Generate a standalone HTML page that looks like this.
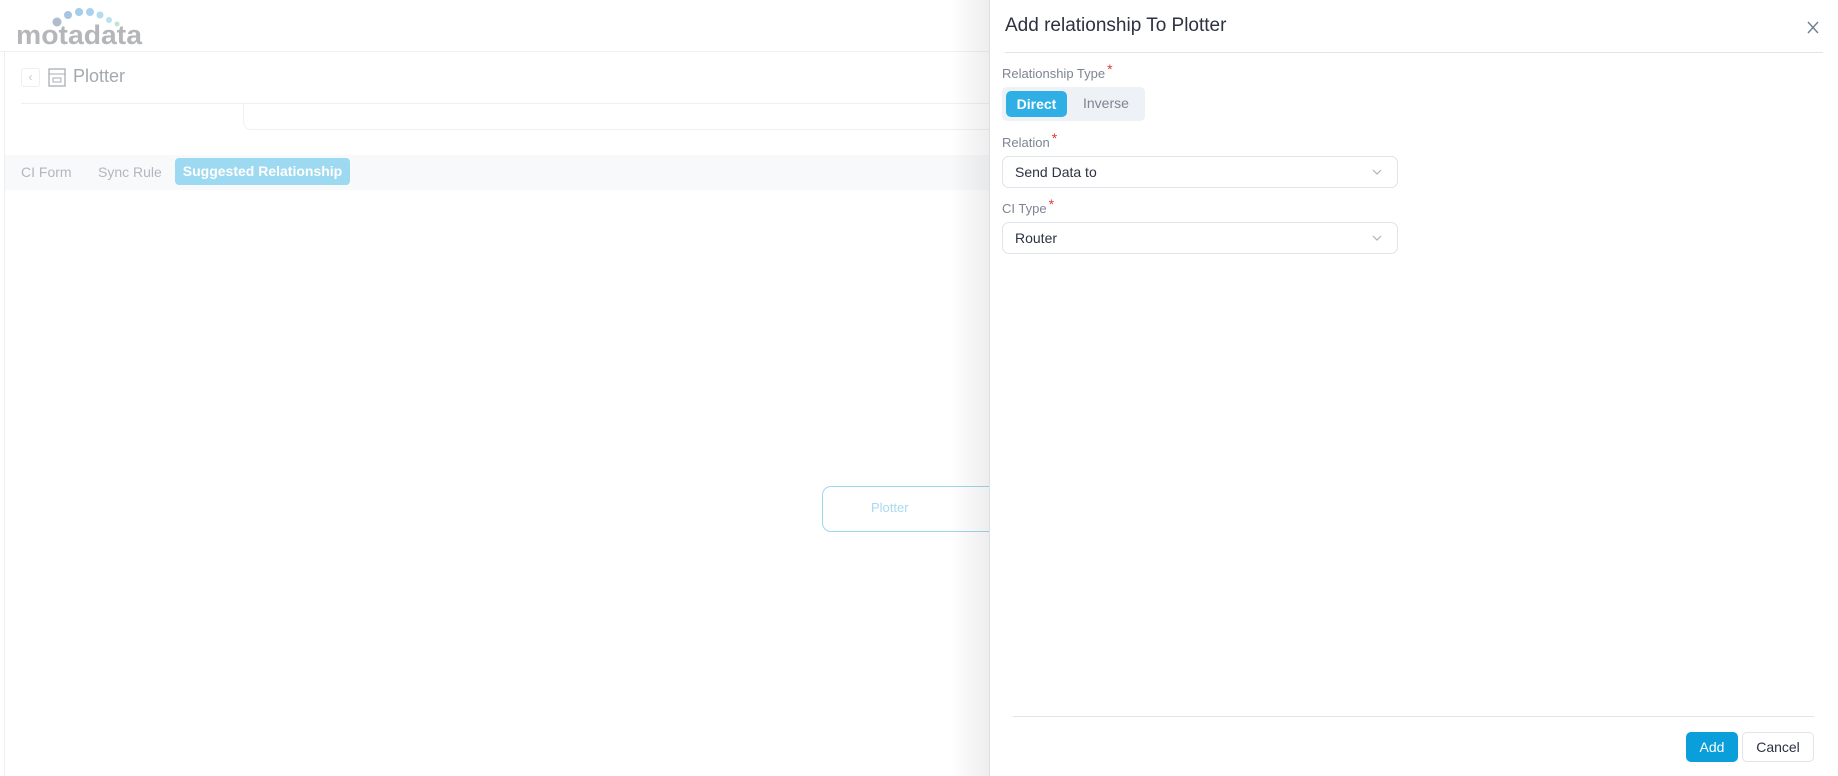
<!DOCTYPE html>
<html><head><meta charset="utf-8"><style>
*{box-sizing:border-box;margin:0;padding:0}
body{width:1838px;height:776px;overflow:hidden;background:#fff;font-family:"Liberation Sans",sans-serif;position:relative}
.a{position:absolute}
.lbl{font-size:13px;color:#7d8592}
.star{color:#e53935;font-size:14px;position:relative;top:-4px;margin-left:2px}
.sel{border:1px solid #dfe3ea;border-radius:7px;background:#fff;font-size:14px;color:#2c3340;padding-left:12px;line-height:30px}
</style></head><body>
<div class="a" style="left:4px;top:52px;width:1px;height:724px;background:#eceef1"></div>
<div class="a" style="left:0;top:51px;width:990px;height:1px;background:#eef0f3"></div>
<svg class="a" style="left:14px;top:6px" width="132" height="40">
<circle cx="43" cy="16" r="4.5" fill="#aebccc"/><circle cx="54" cy="9" r="4" fill="#a6c6e0"/><circle cx="65" cy="6" r="4" fill="#a3cde8"/><circle cx="76" cy="6" r="4" fill="#a8d3ec"/><circle cx="86" cy="9" r="3.5" fill="#b3dcee"/><circle cx="95" cy="14" r="3" fill="#b7e3ee"/><circle cx="103" cy="18" r="2.5" fill="#bfe6cf"/>
<text x="2" y="38" font-family="Liberation Sans" font-weight="bold" font-size="27" fill="#b4b6ba" textLength="126" lengthAdjust="spacingAndGlyphs">motadata</text></svg>
<div class="a" style="left:21px;top:68px;width:19px;height:19px;border:1px solid #eceef1;border-radius:3px;color:#c3c7cd;font-size:12px;text-align:center;line-height:17px">‹</div>
<svg class="a" style="left:48px;top:68px" width="18" height="19"><rect x="1" y="1" width="16" height="17" fill="none" stroke="#a9adb4" stroke-width="1.3"/><line x1="1" y1="6" x2="17" y2="6" stroke="#a9adb4"/><rect x="5" y="10" width="8" height="4" fill="none" stroke="#a9adb4"/></svg>
<div class="a" style="left:73px;top:66px;font-size:18px;color:#a4a8af">Plotter</div>
<div class="a" style="left:21px;top:103px;width:969px;height:1px;background:#eef0f3"></div>
<div class="a" style="left:243px;top:104px;width:760px;height:26px;border:1px solid #eef0f3;border-top:none;border-radius:0 0 0 8px"></div>
<div class="a" style="left:5px;top:155px;width:985px;height:35px;background:#f8f9fb"></div>
<div class="a" style="left:21px;top:164px;font-size:14px;color:#b3b7bd">CI Form</div>
<div class="a" style="left:98px;top:164px;font-size:14px;color:#b3b7bd">Sync Rule</div>
<div class="a" style="left:175px;top:158px;width:175px;height:27px;background:#9dd9f0;border-radius:4px;color:#fff;font-size:14px;font-weight:bold;text-align:center;line-height:27px">Suggested Relationship</div>
<div class="a" style="left:822px;top:486px;width:200px;height:46px;border:1px solid #9fd7ee;border-radius:9px"></div>
<div class="a" style="left:871px;top:500px;font-size:13px;color:#a8daf0">Plotter</div>
<div class="a" style="left:950px;top:0;width:40px;height:776px;background:linear-gradient(to right,rgba(0,0,0,0),rgba(0,0,0,0.07))"></div>
<div class="a" style="left:989px;top:0;width:849px;height:776px;background:#fff;border-left:1px solid #dcdfe5;border-radius:0 14px 14px 0"></div>
<div class="a" style="left:1005px;top:15px;font-size:19px;color:#2b3240">Add relationship To Plotter</div>
<svg class="a" style="left:1807px;top:21px" width="12" height="13"><path d="M1 1L11 12M11 1L1 12" stroke="#6e7d92" stroke-width="1.4"/></svg>
<div class="a" style="left:1005px;top:52px;width:818px;height:1px;background:#dfe4ec"></div>
<div class="a lbl" style="left:1002px;top:65px">Relationship Type<span class="star">*</span></div>
<div class="a" style="left:1002px;top:87px;width:143px;height:34px;background:#eef1f5;border-radius:5px"></div>
<div class="a" style="left:1006px;top:91px;width:61px;height:26px;background:#2fafe3;border-radius:5px;color:#fff;font-size:14px;font-weight:bold;text-align:center;line-height:26px">Direct</div>
<div class="a" style="left:1083px;top:95px;font-size:14px;color:#7d8592">Inverse</div>
<div class="a lbl" style="left:1002px;top:134px">Relation<span class="star">*</span></div>
<div class="a sel" style="left:1002px;top:156px;width:396px;height:32px">Send Data to</div>
<svg class="a" style="left:1372px;top:169px" width="10" height="6"><path d="M1 1L5 5L9 1" fill="none" stroke="#aab2bf" stroke-width="1.2"/></svg>
<div class="a lbl" style="left:1002px;top:200px">CI Type<span class="star">*</span></div>
<div class="a sel" style="left:1002px;top:222px;width:396px;height:32px">Router</div>
<svg class="a" style="left:1372px;top:235px" width="10" height="6"><path d="M1 1L5 5L9 1" fill="none" stroke="#aab2bf" stroke-width="1.2"/></svg>
<div class="a" style="left:1013px;top:716px;width:801px;height:1px;background:#dfe4ec"></div>
<div class="a" style="left:1686px;top:732px;width:52px;height:30px;background:#0a9edb;border-radius:5px;color:#fff;font-size:14px;text-align:center;line-height:30px">Add</div>
<div class="a" style="left:1742px;top:732px;width:72px;height:30px;border:1px solid #dfe4ec;border-radius:5px;color:#2b3240;font-size:14px;text-align:center;line-height:28px">Cancel</div>
</body></html>
